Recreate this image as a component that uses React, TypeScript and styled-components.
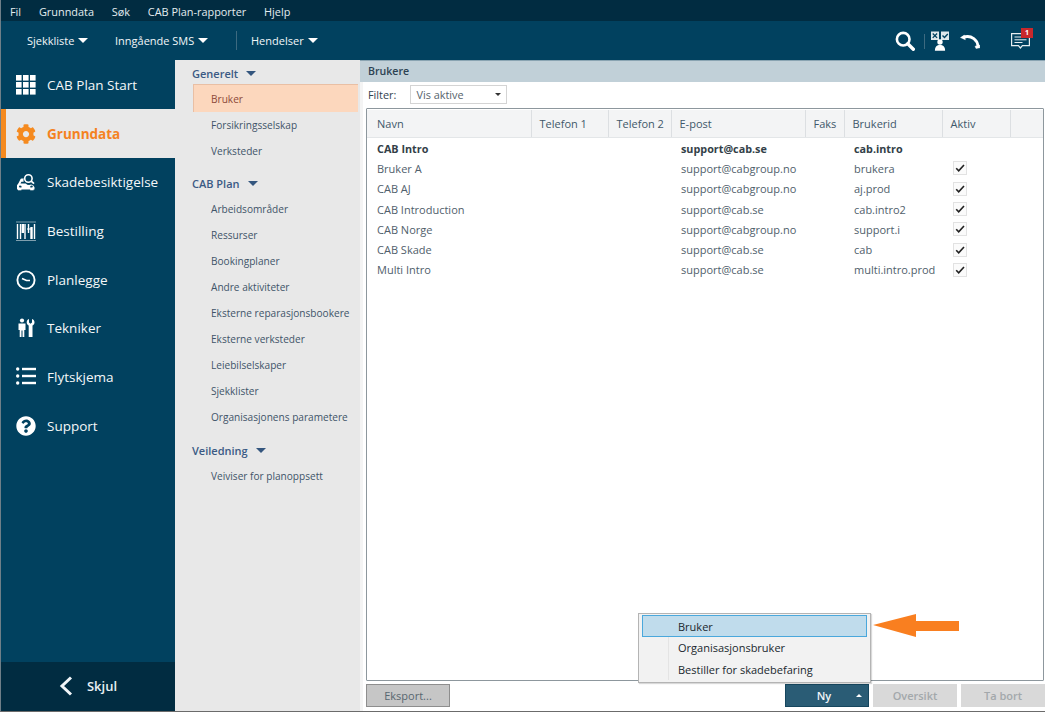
import React from "react";
import styled, { createGlobalStyle } from "styled-components";
import { FaCog, FaQuestionCircle } from "react-icons/fa";

const Global = createGlobalStyle`
  html, body { margin: 0; padding: 0; background: #fff; }
  body { font-family: "Open Sans", "Noto Sans", "Liberation Sans", sans-serif; }
  * { box-sizing: border-box; }
`;

const Page = styled.div`
  position: relative;
  width: 1045px;
  height: 712px;
  overflow: hidden;
  display: flex;
  flex-direction: column;
  border-left: 1px solid #6f7f88;
  border-bottom: 1px solid #6b6b6b;
`;

const MenuBar = styled.div`
  height: 21px;
  flex: none;
  background: #012c41;
  display: flex;
  align-items: center;
  padding: 1px 0 0 9px;
  gap: 17.8px;
  color: #e4ecf0;
  font-size: 10.9px;
`;

const ToolBar = styled.div`
  height: 39px;
  flex: none;
  background: #01415f;
  display: flex;
  align-items: center;
  color: #f2f6f8;
  font-size: 11px;
  padding-left: 26px;
  padding-bottom: 1px;
`;

const ToolItem = styled.span<{ $w: number }>`
  width: ${(p) => p.$w}px;
  display: flex;
  align-items: center;
  gap: 4px;
`;

const Caret = styled.i<{ $c?: string; $s?: number }>`
  display: inline-block;
  width: 0;
  height: 0;
  border-left: ${(p) => p.$s ?? 5}px solid transparent;
  border-right: ${(p) => p.$s ?? 5}px solid transparent;
  border-top: ${(p) => (p.$s ?? 5) + 0.5}px solid ${(p) => p.$c ?? "#fff"};
`;

const ToolSep = styled.span`
  width: 1px;
  height: 19px;
  background: #3d6a80;
  margin-right: 14px;
`;

const IconSep = styled.span`
  width: 1px;
  height: 15px;
  background: #3d6a80;
  margin: 0 6px 0 9px;
`;

const ToolIcons = styled.div`
  margin-left: auto;
  display: flex;
  align-items: center;
  height: 100%;
  padding: 2px 15px 0 0;
  gap: 0;
`;

const PhoneSlot = styled.span`
  display: block;
  margin-left: 11px;
  height: 15px;
`;

const Badge = styled.span`
  position: absolute;
  top: -5px;
  right: -3px;
  width: 12px;
  height: 10px;
  background: #c8282c;
  color: #fff;
  font-size: 7px;
  font-weight: 700;
  line-height: 10px;
  text-align: center;
`;

const ChatWrap = styled.span`
  position: relative;
  display: block;
  width: 19px;
  height: 16px;
  margin-left: 31px;
`;

const Body = styled.div`
  flex: 1;
  display: flex;
  min-height: 0;
`;

const Sidebar = styled.nav`
  width: 174px;
  flex: none;
  background: #01415f;
  display: flex;
  flex-direction: column;
  padding-top: 0.6px;
`;

const NavItem = styled.div<{ $active?: boolean }>`
  height: 48.7px;
  flex: none;
  display: flex;
  align-items: center;
  padding-left: ${(p) => (p.$active ? "10px" : "15px")};
  gap: 11px;
  font-size: 13.5px;
  color: ${(p) => (p.$active ? "#f5821f" : "#f4f7f9")};
  font-weight: ${(p) => (p.$active ? 700 : 400)};
  background: ${(p) => (p.$active ? "#e8e8e8" : "transparent")};
  border-left: ${(p) => (p.$active ? "5px solid #f58a1f" : "none")};
  & > svg { width: 20px; height: 20px; flex: none; }
`;

const Collapse = styled.div`
  margin-top: auto;
  height: 49px;
  background: #012c41;
  display: flex;
  align-items: center;
  justify-content: center;
  gap: 14px;
  color: #e8f0f4;
  font-size: 13px;
  font-weight: 600;
  padding: 0 0 1px 0;
`;

const Tree = styled.div`
  width: 185px;
  flex: none;
  background: #e8e8e8;
  padding-top: 5px;
  display: flex;
  flex-direction: column;
`;

const GroupHead = styled.div<{ $mt?: number; $mb?: number }>`
  height: 16px;
  flex: none;
  margin-top: ${(p) => p.$mt ?? 0}px;
  margin-bottom: ${(p) => p.$mb ?? 5}px;
  padding-left: 17px;
  display: flex;
  align-items: center;
  gap: 8px;
  font-size: 11px;
  font-weight: 600;
  color: #3b5a84;
`;

const TreeItem = styled.div`
  height: 26px;
  flex: none;
  padding-left: 36px;
  display: flex;
  align-items: center;
  font-size: 10.1px;
  white-space: nowrap;
  color: #3f5468;
`;

const TreeSelected = styled(TreeItem)`
  height: 28px;
  margin: 0 2px 0 18px;
  padding: 0 0 0 17px;
  color: #8c4a3a;
  background: #fcd7bd;
  border-left: 1px solid #e9bfa4;
  border-top: 1px solid #e9bfa4;
`;

const Content = styled.main`
  flex: 1;
  min-width: 0;
  display: flex;
  flex-direction: column;
  background: #fff;
`;

const TitleBar = styled.div`
  height: 22px;
  flex: none;
  background: #c1d0d8;
  border-top: 1px solid #8aa4b2;
  padding: 0 0 2px 8px;
  display: flex;
  align-items: center;
  font-size: 10.6px;
  font-weight: 600;
  color: #2c4252;
`;

const Pane = styled.div`
  flex: 1;
  min-height: 0;
  display: flex;
  flex-direction: column;
  border-left: 3px solid #f4f4f4;
`;

const FilterRow = styled.div`
  height: 26px;
  flex: none;
  display: flex;
  align-items: center;
  padding: 0 0 2px 5px;
  gap: 14px;
  font-size: 10.9px;
  color: #33434f;
`;

const Select = styled.div`
  width: 97px;
  height: 19px;
  border: 1px solid #d4d4d4;
  padding: 0 5px;
  display: flex;
  align-items: center;
  justify-content: space-between;
  color: #56636c;
`;

const TableBox = styled.div`
  height: 573px;
  flex: none;
  margin-left: 3px;
  margin-right: 1px;
  border: 1px solid #8d979d;
  border-radius: 1px;
  overflow: hidden;
`;

const cols = "165px 77px 63px 134px 39px 98px 68px 33px";

const HeadRow = styled.div`
  display: grid;
  grid-template-columns: ${cols};
  height: 29px;
  background: #f3f4f5;
  border-bottom: 1px solid #e3e6e8;
  border-top: 1px solid #fff;
`;

const HeadCell = styled.div<{ $first?: boolean }>`
  display: flex;
  align-items: center;
  padding-left: ${(p) => (p.$first ? "10px" : "7.5px")};
  font-size: 11px;
  color: #41586a;
  border-right: 1px solid #dcdfe2;
  white-space: nowrap;
`;

const Row = styled.div`
  display: grid;
  grid-template-columns: ${cols};
  height: 20.3px;
  align-items: center;
`;

const Cell = styled.div<{ $bold?: boolean; $first?: boolean }>`
  padding-left: ${(p) => (p.$first ? "10px" : "9px")};
  font-size: ${(p) => (p.$bold ? "10.8px" : "11px")};
  white-space: nowrap;
  font-weight: ${(p) => (p.$bold ? 700 : 400)};
  color: ${(p) => (p.$bold ? "#333f48" : "#50606b")};
`;

const Check = styled.span`
  display: block;
  width: 14px;
  height: 14px;
  margin-left: 10px;
  border: 1px solid #e2e2e2;
  background: #fbfbfb;
  svg { display: block; width: 12px; height: 12px; }
`;

const Footer = styled.div`
  flex: 1;
  display: flex;
  align-items: center;
  padding: 0 0 1px 3px;
`;

const Btn = styled.div<{ $kind?: "export" | "primary" | "off"; $last?: boolean }>`
  width: 84px;
  height: 23px;
  display: flex;
  align-items: center;
  justify-content: center;
  position: relative;
  font-size: 11px;
  margin-right: ${(p) => (p.$last ? "0" : p.$kind === "export" ? "335px" : "4px")};
  padding-right: ${(p) => (p.$kind === "primary" ? "6px" : "0")};
  background: ${(p) => (p.$kind === "export" ? "#c6c6c6" : p.$kind === "primary" ? "#2a5c75" : "#d9d9d9")};
  color: ${(p) => (p.$kind === "export" ? "#586770" : p.$kind === "primary" ? "#f0f5f8" : "#a3a8ab")};
  border: ${(p) => (p.$kind === "export" ? "1px solid #8e8e8e" : p.$kind === "primary" ? "1px solid #16465e" : "none")};
  font-weight: ${(p) => (p.$kind === "export" ? 400 : 600)};
`;

const UpCaret = styled.i`
  position: absolute;
  right: 6px;
  top: 9px;
  width: 0;
  height: 0;
  border-left: 3.5px solid transparent;
  border-right: 3.5px solid transparent;
  border-bottom: 3.5px solid #fff;
`;

const Popup = styled.div`
  position: absolute;
  left: 637px;
  top: 613px;
  width: 233px;
  height: 70px;
  background: #f2f2f2;
  border: 1px solid #b4b4b4;
  box-shadow: 1px 1px 1px rgba(0, 0, 0, 0.15);
  padding: 1px 3px 1px 3px;
  display: flex;
  flex-direction: column;
`;

const PopupRule = styled.span`
  position: absolute;
  left: 29px;
  top: 2px;
  bottom: 2px;
  width: 1px;
  background: #e4e4e4;
`;

const PopupItem = styled.div<{ $hot?: boolean }>`
  position: relative;
  height: ${(p) => (p.$hot ? "22px" : "21.5px")};
  flex: none;
  padding-left: ${(p) => (p.$hot ? "35px" : "36px")};
  display: flex;
  align-items: center;
  font-size: 11px;
  color: #20282e;
  background: ${(p) => (p.$hot ? "#c0dcec" : "transparent")};
  border: ${(p) => (p.$hot ? "1px solid #4aa8dc" : "none")};
`;

const ArrowMark = styled.svg`
  position: absolute;
  left: 871px;
  top: 613px;
`;

const Ic = { fill: "#fff" };

const GridIcon = () => (
  <svg viewBox="0 0 20 20" {...Ic}>
    {[0, 7, 14].map((y) =>
      [0, 7, 14].map((x) => <rect key={`${x}-${y}`} x={x} y={y} width="5.6" height="5.6" />)
    )}
  </svg>
);

const CarIcon = () => (
  <svg viewBox="0 0 20 20">
    <path fill="#fff" d="M1 16.500v-3.200l1.600-2.200 1.700-3.600c.3-.6.7-.9 1.300-.9h2.200a6 6 0 0 0-.2 3.200H5.400l-.9 1.700h5.200a5 5 0 0 0 5.400 1.100l2 .7 1.400 1.900v2.200H1zm3-3a1 1 0 1 0 0 2h1.500v-1.600L4 13.500zm11.800 0-1.500.4V15.500h1.500a1 1 0 1 0 0-2z" />
    <rect x="2" y="16" width="3.400" height="2.300" fill="#fff" />
    <rect x="14.200" y="16" width="3.400" height="2.300" fill="#fff" />
    <circle cx="12.400" cy="6.500" r="3.700" fill="none" stroke="#fff" strokeWidth="1.600" />
    <path d="M15.200 9.200l2.800 2.500" stroke="#fff" strokeWidth="1.800" />
  </svg>
);

const BarcodeIcon = () => (
  <svg viewBox="0 0 20 20" fill="none" stroke="#fff">
    <path strokeWidth="1" strokeDasharray="1 1" d="M.5 1h19M.5 19.500h19" />
    <path strokeWidth="1.400" d="M1.500 3v15M4.500 3v15M9 3v15M12.500 3v9M18.500 3v15" />
    <path strokeWidth="2.400" d="M6.800 3v9M15.500 6v12" />
    <path strokeWidth="1" d="M11 8h5" />
  </svg>
);

const ClockIcon = () => (
  <svg viewBox="0 0 20 20" fill="none" stroke="#fff">
    <circle cx="10" cy="10" r="8.600" strokeWidth="1.900" />
    <path d="M6 8.500l4.500 2h3.500" strokeWidth="1.700" />
  </svg>
);

const TechIcon = () => (
  <svg viewBox="0 0 20 20" fill="#fff">
    <circle cx="6" cy="2.500" r="2.100" />
    <path d="M2.500 5.500h7v6.500H8.300v7H6.500v-6.500h-1V19H3.700v-7H2.500z" />
    <path d="M13 1v3.500l1.500 1.200L16 4.500V1c1.600.5 2.500 1.800 2.500 3.400 0 1.400-.8 2.500-2 3V19h-3.800V7.400c-1.200-.5-2-1.600-2-3C10.700 2.800 11.500 1.500 13 1z" />
  </svg>
);

const ListIcon = () => (
  <svg viewBox="0 0 20 20" fill="#fff">
    {[2, 9, 16].map((y) => (
      <g key={y}>
        <circle cx="1.700" cy={y} r="1.700" />
        <rect x="6" y={y - 1.200} width="14" height="2.400" />
      </g>
    ))}
  </svg>
);

const SearchIcon = () => (
  <svg width="20" height="20" viewBox="0 0 20 20" fill="none" stroke="#fff">
    <circle cx="8.200" cy="8.200" r="6.300" strokeWidth="2.600" />
    <path d="M12.800 12.800l5.500 5.500" strokeWidth="3.400" strokeLinecap="round" />
  </svg>
);

const VoteIcon = () => (
  <svg width="18" height="20" viewBox="0 0 18 20">
    <rect x="0" y="0.500" width="8" height="8.500" fill="#dfe8ec" />
    <rect x="10" y="0.500" width="8" height="8.500" fill="#dfe8ec" />
    <path d="M1.700 2.500l4.400 4.400M6.100 2.500l-4.400 4.400" stroke="#01415f" strokeWidth="1.300" />
    <path d="M11.500 4.500l2 2 3.300-3.500" stroke="#01415f" strokeWidth="1.400" fill="none" />
    <circle cx="9" cy="11" r="2.700" fill="#fff" />
    <path d="M3.900 19.800c0-4 2-5.700 5.100-5.700s5.100 1.700 5.100 5.700z" fill="#fff" />
  </svg>
);

const PhoneIcon = () => (
  <svg width="20" height="15" viewBox="0 0 21 15" fill="none" stroke="#fff">
    <path d="M3 3.500C6.500 1.800 11 2 14.500 4.500 17 6.300 18.500 9 19 12.500" strokeWidth="3" />
    <path d="M0.500 3.400 4.600.8l1 4.800z" fill="#fff" strokeWidth="0.500" />
    <path d="M15.800 12.500l4.900-1.200.3 2.700-4.200.8z" fill="#fff" strokeWidth="0.500" />
  </svg>
);

const ChatIcon = () => (
  <svg width="19" height="16" viewBox="0 0 19 16" fill="none" stroke="#e6edf0">
    <path d="M.6.600h17.800v12h-7l-2 2.400-2-2.400H.6z" strokeWidth="1.200" />
    <path d="M3.500 4h12M3.500 6.800h12M3.500 9.500h8" strokeWidth="1" />
  </svg>
);

const BackIcon = () => (
  <svg width="14" height="20" viewBox="0 0 14 20" fill="none" stroke="#f0f5f8">
    <path d="M12 1.500 3 10l9 8.500" strokeWidth="3" />
  </svg>
);

const CheckMark = () => (
  <svg viewBox="0 0 12 12" fill="none" stroke="#222">
    <path d="M2.200 6.300l2.500 2.600L10 3" strokeWidth="1.600" />
  </svg>
);

const navItems: { label: string; icon: React.ReactNode; active?: boolean }[] = [
  { label: "CAB Plan Start", icon: <GridIcon /> },
  { label: "Grunndata", icon: <FaCog color="#f58a1f" size={20} />, active: true },
  { label: "Skadebesiktigelse", icon: <CarIcon /> },
  { label: "Bestilling", icon: <BarcodeIcon /> },
  { label: "Planlegge", icon: <ClockIcon /> },
  { label: "Tekniker", icon: <TechIcon /> },
  { label: "Flytskjema", icon: <ListIcon /> },
  { label: "Support", icon: <FaQuestionCircle color="#fff" size={20} /> },
];

const users = [
  ["CAB Intro", "support@cab.se", "cab.intro"],
  ["Bruker A", "support@cabgroup.no", "brukera"],
  ["CAB AJ", "support@cabgroup.no", "aj.prod"],
  ["CAB Introduction", "support@cab.se", "cab.intro2"],
  ["CAB Norge", "support@cabgroup.no", "support.i"],
  ["CAB Skade", "support@cab.se", "cab"],
  ["Multi Intro", "support@cab.se", "multi.intro.prod"],
];

const heads = ["Navn", "Telefon 1", "Telefon 2", "E-post", "Faks", "Brukerid", "Aktiv", ""];

export default function App() {
  return (
    <Page>
      <Global />
      <MenuBar>
        <span>Fil</span>
        <span>Grunndata</span>
        <span>Søk</span>
        <span>CAB Plan-rapporter</span>
        <span>Hjelp</span>
      </MenuBar>
      <ToolBar>
        <ToolItem $w={88}>Sjekkliste <Caret /></ToolItem>
        <ToolItem $w={121}>Inngående SMS <Caret /></ToolItem>
        <ToolSep />
        <ToolItem $w={70}>Hendelser <Caret /></ToolItem>
        <ToolIcons>
          <SearchIcon />
          <IconSep />
          <VoteIcon />
          <PhoneSlot><PhoneIcon /></PhoneSlot>
          <ChatWrap>
            <ChatIcon />
            <Badge>1</Badge>
          </ChatWrap>
        </ToolIcons>
      </ToolBar>
      <Body>
        <Sidebar>
          {navItems.map((n) => (
            <NavItem key={n.label} $active={n.active}>
              {n.icon}
              {n.label}
            </NavItem>
          ))}
          <Collapse>
            <BackIcon />
            Skjul
          </Collapse>
        </Sidebar>
        <Tree>
          <GroupHead $mb={3}>Generelt <Caret $c="#34567e" /></GroupHead>
          <TreeSelected>Bruker</TreeSelected>
          <TreeItem>Forsikringsselskap</TreeItem>
          <TreeItem>Verksteder</TreeItem>
          <GroupHead $mt={11}>CAB Plan <Caret $c="#34567e" /></GroupHead>
          <TreeItem>Arbeidsområder</TreeItem>
          <TreeItem>Ressurser</TreeItem>
          <TreeItem>Bookingplaner</TreeItem>
          <TreeItem>Andre aktiviteter</TreeItem>
          <TreeItem>Eksterne reparasjonsbookere</TreeItem>
          <TreeItem>Eksterne verksteder</TreeItem>
          <TreeItem>Leiebilselskaper</TreeItem>
          <TreeItem>Sjekklister</TreeItem>
          <TreeItem>Organisasjonens parametere</TreeItem>
          <GroupHead $mt={12}>Veiledning <Caret $c="#34567e" /></GroupHead>
          <TreeItem>Veiviser for planoppsett</TreeItem>
        </Tree>
        <Content>
          <TitleBar>Brukere</TitleBar>
          <Pane>
            <FilterRow>
              Filter:
              <Select>
                Vis aktive
                <Caret $c="#333" $s={3} />
              </Select>
            </FilterRow>
            <TableBox>
              <HeadRow>
                {heads.map((h, i) => (
                  <HeadCell key={i} $first={i === 0}>{h}</HeadCell>
                ))}
              </HeadRow>
              <div>
                {users.map(([name, mail, id], i) => (
                  <Row key={name}>
                    <Cell $first $bold={i === 0}>{name}</Cell>
                    <span />
                    <span />
                    <Cell $bold={i === 0}>{mail}</Cell>
                    <span />
                    <Cell $bold={i === 0}>{id}</Cell>
                    <div>{i > 0 && <Check><CheckMark /></Check>}</div>
                    <span />
                  </Row>
                ))}
              </div>
            </TableBox>
            <Footer>
              <Btn $kind="export">Eksport...</Btn>
              <Btn $kind="primary">Ny<UpCaret /></Btn>
              <Btn $kind="off">Oversikt</Btn>
              <Btn $kind="off" $last>Ta bort</Btn>
            </Footer>
          </Pane>
        </Content>
      </Body>
      <Popup>
        <PopupRule />
        <PopupItem $hot>Bruker</PopupItem>
        <PopupItem>Organisasjonsbruker</PopupItem>
        <PopupItem>Bestiller for skadebefaring</PopupItem>
      </Popup>
      <ArrowMark width="88" height="25" viewBox="0 0 88 25">
        <path d="M1 12 44 1v7h43v10H44v6z" fill="#f97f20" />
      </ArrowMark>
    </Page>
  );
}
